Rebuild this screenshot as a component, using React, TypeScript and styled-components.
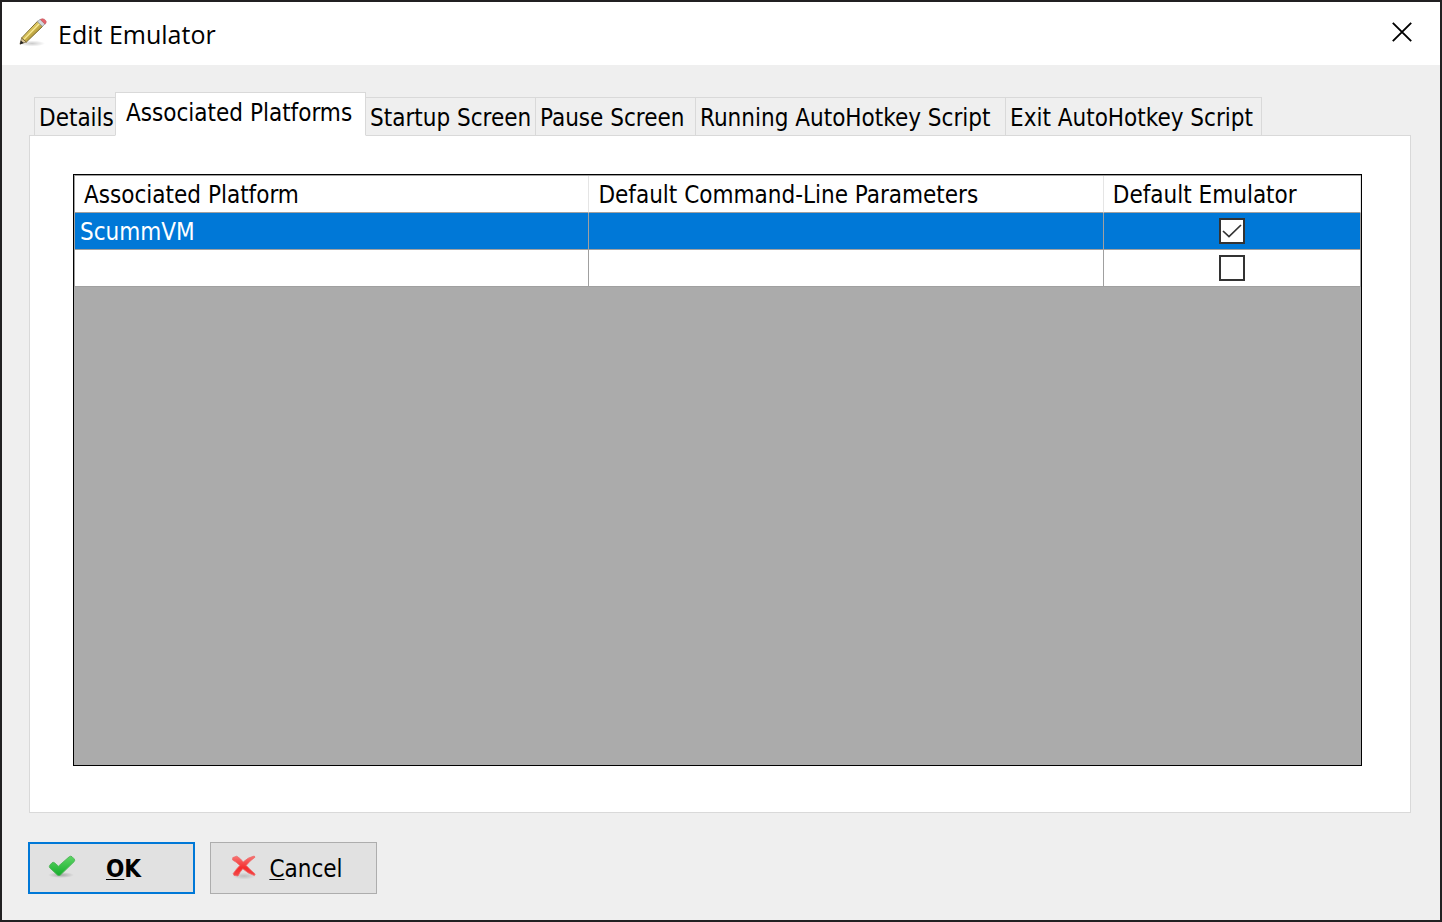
import React, { useState } from "react";
import styled, { createGlobalStyle, css } from "styled-components";

const GlobalStyle = createGlobalStyle`
  *, *::before, *::after { box-sizing: border-box; }
  body {
    margin: 0;
    background: #212022;
    font-family: "DejaVu Sans Condensed", Tahoma, sans-serif;
    font-size: 24px;
    line-height: 32px;
    color: #000;
  }
`;

const Dialog = styled.main`
  min-height: 100vh;
  border: 2px solid #212022;
  background: #efefef;
  display: flex;
  flex-direction: column;
`;

const TitleBar = styled.header`
  height: 63px;
  flex: none;
  padding: 0 20px 0 16px;
  background: #fff;
  display: flex;
  align-items: center;
`;

const Title = styled.h1`
  margin: 0 auto 0 8px;
  font-family: "Open Sans", "Segoe UI", sans-serif;
  font-size: 25px;
  font-weight: 400;
`;

const CloseButton = styled.button`
  width: 36px;
  height: 36px;
  margin-bottom: 4px;
  padding: 0;
  border: 0;
  background: transparent;
  display: grid;
  place-items: center;
`;

const Body = styled.div`
  flex: 1;
  padding: 27px 29px 26px 27px;
  display: flex;
  flex-direction: column;
`;

const TabStrip = styled.div`
  height: 44px;
  margin-bottom: -1px;
  padding-left: 5px;
  display: flex;
  align-items: flex-end;
`;

const Tab = styled.button<{ $width: number; $selected: boolean }>`
  width: ${(p) => p.$width}px;
  height: 39px;
  margin-left: -1px;
  padding: 2px 0 0 4px;
  border: 1px solid #d9d9d9;
  background: #efefef;
  color: inherit;
  font: inherit;
  white-space: nowrap;
  display: flex;
  align-items: center;

  &:first-child { margin-left: 0; }

  ${(p) =>
    p.$selected &&
    css`
      height: 44px;
      padding: 0 0 2px 10px;
      border-bottom-color: #fff;
      background: #fff;
      z-index: 1;
    `}
`;

const TabPanel = styled.section`
  flex: 1;
  padding: 38px 48px 46px 43px;
  border: 1px solid #d9d9d9;
  background: #fff;
  display: flex;
`;

const GridFrame = styled.div`
  flex: 1;
  border: 1px solid #000;
  background: #ababab;
`;

const Grid = styled.table`
  width: 100%;
  table-layout: fixed;
  border-collapse: separate;
  border-spacing: 0;
  border-top: 1px solid #a0a0a0;
  border-left: 1px solid #a0a0a0;
  background: #fff;
`;

const HeadCell = styled.th<{ $share: number }>`
  width: ${(p) => p.$share}%;
  height: 37px;
  padding: 2px 9px 0;
  border-right: 1px solid #e5e5e5;
  border-bottom: 1px solid #a0a0a0;
  font-weight: 400;
  text-align: left;
  white-space: nowrap;
`;

const Row = styled.tr<{ $selected?: boolean }>`
  background: ${(p) => (p.$selected ? "#0078d7" : "#fff")};
  color: ${(p) => (p.$selected ? "#fff" : "#000")};
`;

const Cell = styled.td<{ $center?: boolean }>`
  height: 37px;
  padding: ${(p) => (p.$center ? "0 5px" : "2px 5px 0")};
  border-right: 1px solid #a0a0a0;
  border-bottom: 1px solid #a0a0a0;
  text-align: ${(p) => (p.$center ? "center" : "left")};
`;

const CheckWrap = styled.label`
  display: grid;
  place-items: center;

  & > * { grid-area: 1 / 1; }
  svg { pointer-events: none; }
`;

const CheckBox = styled.input`
  appearance: none;
  width: 26px;
  height: 26px;
  margin: 0;
  border: 2px solid #333;
  background: #fff;
`;

const Actions = styled.footer`
  margin: 29px 0 0 -1px;
  display: flex;
  gap: 15px;
`;

const ActionButton = styled.button<{ $primary?: boolean }>`
  width: 167px;
  height: 52px;
  padding: 0;
  border: ${(p) => (p.$primary ? "2px solid #0078d7" : "1px solid #adadad")};
  background: #e1e1e1;
  color: #000;
  font: inherit;
  font-weight: ${(p) => (p.$primary ? 700 : 400)};
  display: flex;
  align-items: center;
`;

const ButtonIcon = styled.span<{ $primary?: boolean }>`
  width: 28px;
  height: 28px;
  margin-left: ${(p) => (p.$primary ? 18 : 19)}px;
  display: block;
`;

const ButtonText = styled.span`
  flex: 1;
  padding: 2px 22px 0 0;
  text-align: center;
`;

const Mnemonic = styled.span`
  text-decoration: underline;
  text-decoration-thickness: 1px;
  text-underline-offset: 2px;
  text-decoration-skip-ink: none;
`;

const PencilIcon = () => (
  <svg width="32" height="32" viewBox="0 0 32 32" aria-hidden="true">
    <defs>
      <linearGradient id="wood" x1="0" y1="0" x2="1" y2="1">
        <stop offset="0.3" stopColor="#efdc72" />
        <stop offset="0.7" stopColor="#a88c2c" />
      </linearGradient>
      <radialGradient id="pencilShade">
        <stop offset="0" stopColor="#000" stopOpacity="0.2" />
        <stop offset="1" stopColor="#000" stopOpacity="0" />
      </radialGradient>
    </defs>
    <ellipse cx="14" cy="25.5" rx="13" ry="3" fill="url(#pencilShade)" />
    <path d="M2 26 3.6 20 8.4 24z" fill="#dcc79a" stroke="#80704c" strokeWidth="0.8" />
    <path d="M1.8 26.4 2.8 22.6 5.8 25z" fill="#222" />
    <path d="M3.6 20 19.6 3.2 25 8 8.4 24z" fill="url(#wood)" stroke="#7d6c34" strokeWidth="1" />
    <path d="M6 21.4 21.8 5.2" stroke="#fbeb98" strokeWidth="1.3" />
    <path d="M19.4 3.8 22 1.4 27 5.8 24.6 8.4z" fill="#d3d8db" stroke="#8f9498" strokeWidth="0.8" />
    <path d="M22.4 1.4Q24.4.2 26.6 1.4 29 3.2 28 5L27 6.2z" fill="#e5626b" stroke="#c65f66" strokeWidth="0.7" />
  </svg>
);

const CloseIcon = () => (
  <svg width="20" height="20" viewBox="0 0 20 20" aria-hidden="true">
    <path d="M.8.8 19.2 19.2M19.2.8.8 19.2" stroke="#000" strokeWidth="1.9" />
  </svg>
);

const OkIcon = () => (
  <svg width="28" height="28" viewBox="0 0 28 28" aria-hidden="true">
    <defs>
      <linearGradient id="green" x1="0" y1="0" x2="0" y2="1">
        <stop offset="0" stopColor="#5ed565" />
        <stop offset="1" stopColor="#16ad2c" />
      </linearGradient>
      <radialGradient id="okShade">
        <stop offset="0" stopColor="#000" stopOpacity="0.26" />
        <stop offset="1" stopColor="#000" stopOpacity="0" />
      </radialGradient>
    </defs>
    <ellipse cx="13" cy="21" rx="13" ry="3" fill="url(#okShade)" />
    <path
      d="M1.8 11.2 4 8.8Q5.2 7.8 6.6 8.8L10.4 12.2 21.2 2.8Q22.6 1.7 24 2.7L26.2 4.9Q27.2 6.2 26.2 7.6L12.4 21Q10.9 22.2 9.4 21L1.9 14Q.8 12.5 1.8 11.2z"
      fill="url(#green)"
      stroke="#4db357"
      strokeWidth="0.9"
    />
  </svg>
);

const CancelIcon = () => (
  <svg width="28" height="28" viewBox="0 0 28 28" aria-hidden="true">
    <defs>
      <linearGradient id="red" x1="0" y1="0" x2="0" y2="1">
        <stop offset="0" stopColor="#f77775" />
        <stop offset="0.6" stopColor="#f52c2c" />
        <stop offset="1" stopColor="#f24a4a" />
      </linearGradient>
      <radialGradient id="cancelShade">
        <stop offset="0" stopColor="#000" stopOpacity="0.16" />
        <stop offset="1" stopColor="#000" stopOpacity="0" />
      </radialGradient>
    </defs>
    <ellipse cx="14" cy="22" rx="12" ry="3.5" fill="url(#cancelShade)" />
    <path
      d="M2.8 3.6 6.8 2.2Q10.6 4.4 13.2 8 17.8 3.4 24.2 2L25 3.2Q20 6.6 16.2 11.4 20.8 16.4 25.2 20L24.4 21.6Q17.6 19.4 12.8 14.8 9.8 18 8 22L4 21.4 3.2 19.6Q6.2 15 9.8 11.4 6.6 8 2.6 6z"
      fill="url(#red)"
      stroke="#ee6a6a"
      strokeWidth="0.8"
    />
  </svg>
);

const CheckMark = () => (
  <svg width="20" height="16" viewBox="0 0 20 16" aria-hidden="true">
    <path d="M1 8 7 13.6 19 2" fill="none" stroke="#333" strokeWidth="1.7" />
  </svg>
);

const TABS = [
  { label: "Details", width: 82 },
  { label: "Associated Platforms", width: 251 },
  { label: "Startup Screen", width: 171 },
  { label: "Pause Screen", width: 161 },
  { label: "Running AutoHotkey Script", width: 311 },
  { label: "Exit AutoHotkey Script", width: 257 },
];

const COLUMNS = [
  { label: "Associated Platform", share: 40 },
  { label: "Default Command-Line Parameters", share: 40 },
  { label: "Default Emulator", share: 20 },
];

export default function App() {
  const [active, setActive] = useState("Associated Platforms");
  const [rows, setRows] = useState([
    { platform: "ScummVM", parameters: "", isDefault: true },
    { platform: "", parameters: "", isDefault: false },
  ]);

  const toggle = (index: number) =>
    setRows(rows.map((r, i) => (i === index ? { ...r, isDefault: !r.isDefault } : r)));

  return (
    <>
      <GlobalStyle />
      <Dialog>
        <TitleBar>
          <PencilIcon />
          <Title>Edit Emulator</Title>
          <CloseButton aria-label="Close">
            <CloseIcon />
          </CloseButton>
        </TitleBar>
        <Body>
          <TabStrip role="tablist">
            {TABS.map((t) => (
              <Tab
                key={t.label}
                role="tab"
                aria-selected={t.label === active}
                $width={t.width}
                $selected={t.label === active}
                onClick={() => setActive(t.label)}
              >
                {t.label}
              </Tab>
            ))}
          </TabStrip>
          <TabPanel role="tabpanel" aria-label={active}>
            <GridFrame>
              <Grid>
                <thead>
                  <tr>
                    {COLUMNS.map((c) => (
                      <HeadCell key={c.label} $share={c.share}>
                        {c.label}
                      </HeadCell>
                    ))}
                  </tr>
                </thead>
                <tbody>
                  {rows.map((r, i) => (
                    <Row key={i} $selected={i === 0}>
                      <Cell>{r.platform}</Cell>
                      <Cell>{r.parameters}</Cell>
                      <Cell $center>
                        <CheckWrap>
                          <CheckBox
                            type="checkbox"
                            aria-label="Default Emulator"
                            checked={r.isDefault}
                            onChange={() => toggle(i)}
                          />
                          {r.isDefault && <CheckMark />}
                        </CheckWrap>
                      </Cell>
                    </Row>
                  ))}
                </tbody>
              </Grid>
            </GridFrame>
          </TabPanel>
          <Actions>
            <ActionButton $primary>
              <ButtonIcon $primary>
                <OkIcon />
              </ButtonIcon>
              <ButtonText>
                <Mnemonic>O</Mnemonic>K
              </ButtonText>
            </ActionButton>
            <ActionButton>
              <ButtonIcon>
                <CancelIcon />
              </ButtonIcon>
              <ButtonText>
                <Mnemonic>C</Mnemonic>ancel
              </ButtonText>
            </ActionButton>
          </Actions>
        </Body>
      </Dialog>
    </>
  );
}
